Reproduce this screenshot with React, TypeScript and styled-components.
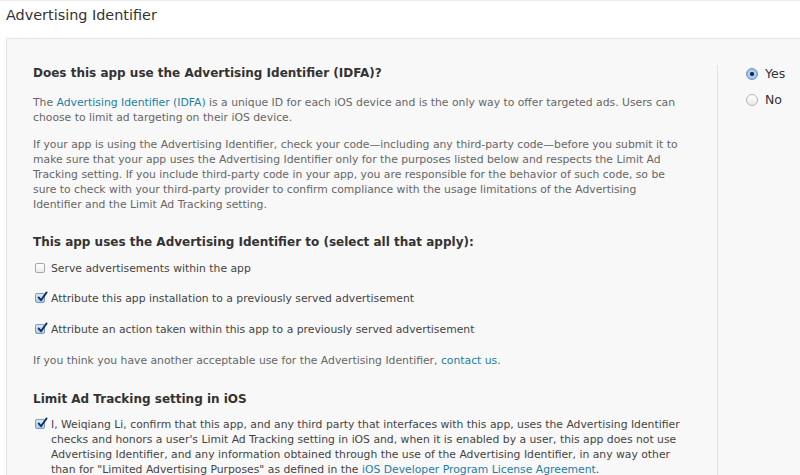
import React from "react";
import styled, { createGlobalStyle } from "styled-components";

const Global = createGlobalStyle`
  html, body { margin: 0; padding: 0; background: #ffffff; }
  body {
    font-family: "DejaVu Sans", "Liberation Sans", sans-serif;
    -webkit-font-smoothing: antialiased;
    overflow: hidden;
  }
`;

const Page = styled.div`
  width: 800px;
  height: 475px;
  overflow: hidden;
  border-top: 1px solid #ececec;
  box-sizing: border-box;
`;

const Title = styled.h1`
  margin: 0;
  padding: 4px 0 0 6px;
  height: 37px;
  box-sizing: border-box;
  font-size: 14.4px;
  font-weight: normal;
  color: #333;
  line-height: 20px;
`;

const Card = styled.section`
  margin-left: 6px;
  width: 820px;
  min-height: 460px;
  background: #f8f8f8;
  border: 1px solid #e6e6e6;
  box-sizing: border-box;
  display: grid;
  grid-template-columns: 710px 1fr;
`;

const Main = styled.div`
  padding: 25px 32px 0 26px;
`;

const Side = styled.div`
  margin-top: 26px;
  border-left: 1px solid #e4e4e4;
  padding: 0 0 0 28px;
  display: flex;
  flex-direction: column;
  gap: 8px;
`;

const Heading = styled.h2<{ $mt?: number }>`
  margin: ${(p) => p.$mt ?? 0}px 0 0;
  font-size: 12px;
  line-height: 18px;
  font-weight: bold;
  color: #333;
`;

const Para = styled.p<{ $mt: number }>`
  margin: ${(p) => p.$mt}px 0 0;
  font-size: 10.8px;
  line-height: 15px;
  color: #666;
`;

const Link = styled.a`
  color: #1b7fa6;
  text-decoration: none;
`;

const CheckRow = styled.label<{ $mt: number }>`
  display: flex;
  align-items: flex-start;
  gap: 6px;
  margin-top: ${(p) => p.$mt}px;
  padding-left: 2px;
  font-size: 10.8px;
  line-height: 15px;
  color: #444;
`;

const Box = styled.span<{ $on: boolean }>`
  flex: 0 0 auto;
  width: 10px;
  height: 10px;
  margin-top: 2px;
  border: 1px solid ${(p) => (p.$on ? "#7d9cc0" : "#a9a9a9")};
  border-radius: 2px;
  background: ${(p) =>
    p.$on
      ? "linear-gradient(#dbeaf8, #a9cbee)"
      : "linear-gradient(#ffffff, #ececec)"};
  position: relative;
  box-sizing: border-box;
`;

const Tick = styled.svg`
  position: absolute;
  left: 0px;
  top: -3px;
  width: 12px;
  height: 12px;
`;

const RadioRow = styled.label`
  display: flex;
  align-items: center;
  gap: 7px;
  font-size: 12.5px;
  line-height: 18px;
  color: #333;
`;

const Radio = styled.span<{ $on: boolean }>`
  width: 12px;
  height: 12px;
  border-radius: 50%;
  box-sizing: border-box;
  border: 1px solid ${(p) => (p.$on ? "#6f93c2" : "#b2b2b2")};
  background: ${(p) =>
    p.$on
      ? "radial-gradient(circle, #1d2c44 0 1.8px, #b4d3f3 2.4px, #7fb0e6 100%)"
      : "linear-gradient(#ffffff, #e9e9e9)"};
`;

const Check = ({ on }: { on: boolean }) => (
  <Box $on={on}>
    {on && (
      <Tick viewBox="0 0 12 12">
        <path
          d="M2.6 6.4 L5 9.2 L10.6 1.4"
          fill="none"
          stroke="#18305a"
          strokeWidth="1.9"
          strokeLinecap="round"
          strokeLinejoin="round"
        />
      </Tick>
    )}
  </Box>
);

export default function App() {
  return (
    <>
      <Global />
      <Page>
        <Title>Advertising Identifier</Title>
        <Card>
          <Main>
            <Heading>Does this app use the Advertising Identifier (IDFA)?</Heading>
            <Para $mt={13}>
              The <Link>Advertising Identifier (IDFA)</Link> is a unique ID for
              each iOS device and is the only way to offer targeted ads. Users
              can choose to limit ad targeting on their iOS device.
            </Para>
            <Para $mt={12}>
              If your app is using the Advertising Identifier, check your
              code—including any third-party code—before you submit it to make
              sure that your app uses the Advertising Identifier only for the
              purposes listed below and respects the Limit Ad Tracking setting.
              If you include third-party code in your app, you are responsible
              for the behavior of such code, so be sure to check with your
              third-party provider to confirm compliance with the usage
              limitations of the Advertising Identifier and the Limit Ad
              Tracking setting.
            </Para>
            <Heading $mt={21}>
              This app uses the Advertising Identifier to (select all that
              apply):
            </Heading>
            <CheckRow $mt={10}>
              <Check on={false} />
              <span>Serve advertisements within the app</span>
            </CheckRow>
            <CheckRow $mt={15}>
              <Check on />
              <span>
                Attribute this app installation to a previously served
                advertisement
              </span>
            </CheckRow>
            <CheckRow $mt={16}>
              <Check on />
              <span>
                Attribute an action taken within this app to a previously served
                advertisement
              </span>
            </CheckRow>
            <Para $mt={16}>
              If you think you have another acceptable use for the Advertising
              Identifier, <Link>contact us</Link>.
            </Para>
            <Heading $mt={22}>Limit Ad Tracking setting in iOS</Heading>
            <CheckRow $mt={9}>
              <Check on />
              <span>
                I, Weiqiang Li, confirm that this app, and any third party that
                interfaces with this app, uses the Advertising Identifier checks
                and honors a user's Limit Ad Tracking setting in iOS and, when it
                is enabled by a user, this app does not use Advertising
                Identifier, and any information obtained through the use of the
                Advertising Identifier, in any way other than for "Limited
                Advertising Purposes" as defined in the{" "}
                <Link>iOS Developer Program License Agreement</Link>.
              </span>
            </CheckRow>
          </Main>
          <Side>
            <RadioRow>
              <Radio $on />
              Yes
            </RadioRow>
            <RadioRow>
              <Radio $on={false} />
              No
            </RadioRow>
          </Side>
        </Card>
      </Page>
    </>
  );
}
